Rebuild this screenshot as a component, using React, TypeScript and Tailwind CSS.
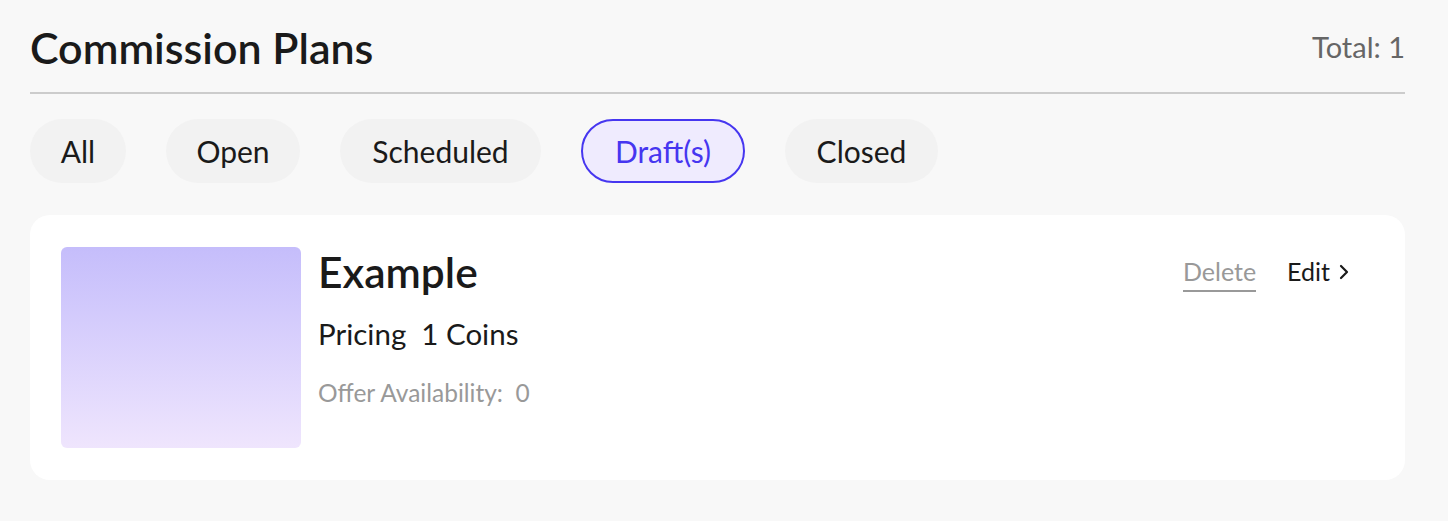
import React from "react";

const tabs: { label: string; w: string }[] = [
  { label: "All", w: "w-[96px]" },
  { label: "Open", w: "w-[134px]" },
  { label: "Scheduled", w: "w-[201px]" },
  { label: "Draft(s)", w: "w-[164px]" },
  { label: "Closed", w: "w-[153px]" },
];

export default function App() {
  return (
    <div
      className="min-h-[521px] bg-[#f8f8f8] pl-[30px] pr-[43px]"
      style={{ fontFamily: "Lato, 'Noto Sans', sans-serif" }}
    >
      <div className="flex h-[92px] items-center justify-between">
        <h1 className="mt-[2px] text-[43px] font-semibold leading-none text-[#1a1a1a]">Commission Plans</h1>
        <span className="text-[29px] leading-none text-[#666666]">Total: 1</span>
      </div>
      <div className="h-[2px] bg-[#cccccc]" />
      <div className="mt-[25px] flex gap-[40px] pl-[-1px]">
        {tabs.map((t) =>
          t.label === "Draft(s)" ? (
            <button
              key={t.label}
              className={`${t.w} flex h-16 items-center justify-center rounded-full border-2 border-[#4636f0] bg-[#efebfe] text-[30px] text-[#4636f0]`}
            >
              {t.label}
            </button>
          ) : (
            <button
              key={t.label}
              className={`${t.w} flex h-16 items-center justify-center rounded-full bg-[#f2f2f2] text-[30px] text-[#1a1a1a]`}
            >
              {t.label}
            </button>
          )
        )}
      </div>
      <div className="mt-[32px] flex rounded-[20px] bg-white py-[32px] pl-[31px] pr-[55px]">
        <div className="h-[201px] w-[240px] shrink-0 rounded-[6px] bg-gradient-to-b from-[#c5bdfb] to-[#efe5fd]" />
        <div className="ml-[17px] flex flex-1 flex-col">
          <div className="flex items-start justify-between">
            <div className="mt-[4px] text-[42.5px] font-semibold leading-none text-[#1a1a1a]">Example</div>
            <div className="mt-[12px] flex items-center gap-[31px] text-[25px] leading-none">
              <span className="border-b-2 border-[#999999] pb-[6px] text-[#999999]">Delete</span>
              <span className="flex items-center gap-[8px] pb-[8px] text-[#1a1a1a]">
                Edit
                <svg width="12" height="16" viewBox="0 0 12 16" fill="none">
                  <path d="M3 2l6 6-6 6" stroke="#1a1a1a" strokeWidth="2.2" strokeLinecap="round" strokeLinejoin="round" />
                </svg>
              </span>
            </div>
          </div>
          <div className="mt-[25px] text-[29.5px] leading-none text-[#1a1a1a]">Pricing&nbsp;&nbsp;1 Coins</div>
          <div className="mt-[33px] text-[24.5px] leading-none text-[#999999]">Offer Availability:&nbsp;&nbsp;0</div>
        </div>
      </div>
    </div>
  );
}
